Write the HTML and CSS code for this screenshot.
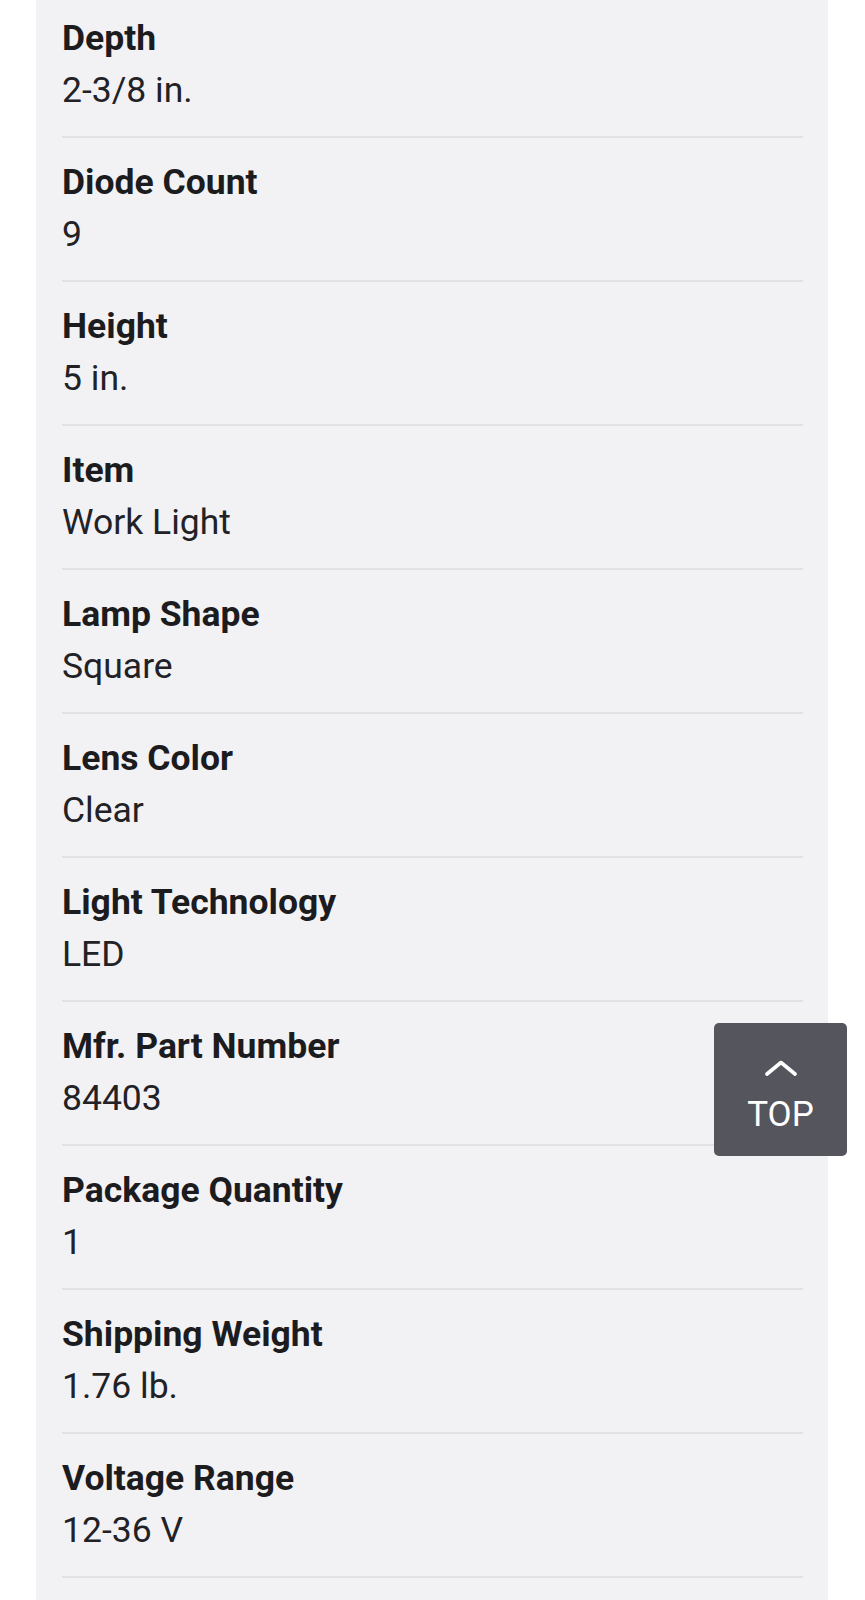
FILE: index.html
```html
<!DOCTYPE html>
<html lang="en">
<head>
  <meta charset="UTF-8" />
  <title>Specifications</title>
  <meta name="viewport" content="width=device-width, initial-scale=1.0" />
  <link rel="stylesheet" href="styles.css">
</head>
<body>

  <!-- Specs panel -->
  <div class="spec-panel">
    <div class="spec-row">
      <div class="spec-label">Depth</div>
      <div class="spec-value">2-3/8 in.</div>
    </div>
    <div class="spec-row">
      <div class="spec-label">Diode Count</div>
      <div class="spec-value">9</div>
    </div>
    <div class="spec-row">
      <div class="spec-label">Height</div>
      <div class="spec-value">5 in.</div>
    </div>
    <div class="spec-row">
      <div class="spec-label">Item</div>
      <div class="spec-value">Work Light</div>
    </div>
    <div class="spec-row">
      <div class="spec-label">Lamp Shape</div>
      <div class="spec-value">Square</div>
    </div>
    <div class="spec-row">
      <div class="spec-label">Lens Color</div>
      <div class="spec-value">Clear</div>
    </div>
    <div class="spec-row">
      <div class="spec-label">Light Technology</div>
      <div class="spec-value">LED</div>
    </div>
    <div class="spec-row">
      <div class="spec-label">Mfr. Part Number</div>
      <div class="spec-value">84403</div>
    </div>
    <div class="spec-row">
      <div class="spec-label">Package Quantity</div>
      <div class="spec-value">1</div>
    </div>
    <div class="spec-row">
      <div class="spec-label">Shipping Weight</div>
      <div class="spec-value">1.76 lb.</div>
    </div>
    <div class="spec-row">
      <div class="spec-label">Voltage Range</div>
      <div class="spec-value">12-36 V</div>
    </div>
  </div>

  <button class="top-btn">
    <svg width="34" height="16" viewBox="0 0 34 16" fill="none" stroke="#fff" stroke-width="3.6" stroke-linecap="round" stroke-linejoin="round">
      <path d="M3 14 L17 2.5 L31 14" />
    </svg>
    <span>TOP</span>
  </button>

</body>
</html>
```

FILE: styles.css
```css
body {
  margin: 0;
  background-color: #fff;
  font-family: Roboto, "Liberation Sans", Arial, sans-serif;
  color: #1c1c1f;
}

/* Specs panel */
.spec-panel {
  margin: -6px 0 0 36px;
  width: 792px;
  min-height: 1620px;
  padding: 0 25px 0 26px;
  box-sizing: border-box;
  background-color: #f2f2f5;
}

.spec-row {
  padding: 18px 0 20px;
  border-bottom: 2px solid #e1e1e6;
}

.spec-label {
  font-size: 35.5px;
  line-height: 52px;
  font-weight: bold;
}

.spec-value {
  font-size: 35.5px;
  line-height: 52px;
  color: #222226;
}

.top-btn {
  position: fixed;
  top: 1023px;
  right: 18px;
  width: 133px;
  height: 133px;
  padding: 10px 0 0;
  border: none;
  border-radius: 5px;
  background-color: #55555d;
  color: #fff;
  font-family: Roboto, "Liberation Sans", Arial, sans-serif;
  font-size: 35px;
  display: flex;
  flex-direction: column;
  align-items: center;
  justify-content: center;
  gap: 24px;
  cursor: pointer;
}

.top-btn span {
  line-height: 30px;
}
```
